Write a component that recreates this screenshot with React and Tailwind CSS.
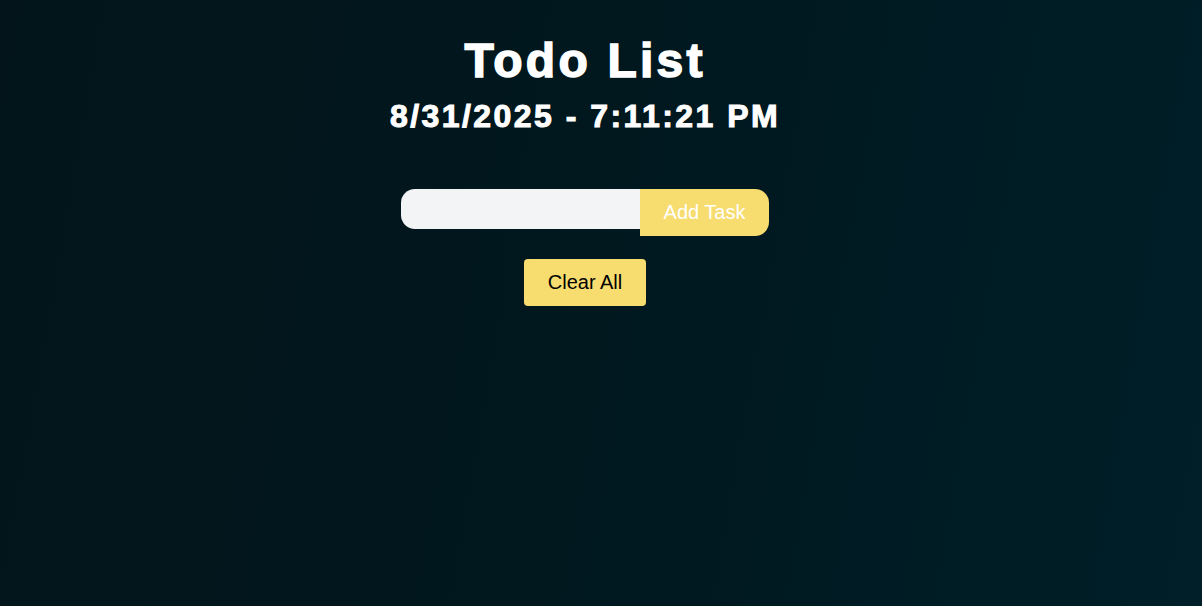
import { useState } from 'react';

export default function App() {
  const [task, setTask] = useState('');

  return (
    <div className="min-h-screen w-full bg-[linear-gradient(100deg,#03151a_0%,#00181f_55%,#001f28_100%)] font-['Liberation_Sans',Arial,sans-serif]">
      <div className="flex flex-col items-center pt-[33px] pr-[32px]">
        {/* Header */}
        <h1 className="text-[48px] leading-[55px] font-black text-white tracking-[3.2px] [-webkit-text-stroke:1.5px_white]">
          Todo List
        </h1>
        <h2 className="mt-[10px] text-[32px] leading-[37px] font-bold text-white tracking-[2.45px] [-webkit-text-stroke:1px_white]">
          8/31/2025 - 7:11:21 PM
        </h2>

        {/* Add form */}
        <div className="mt-[54px] flex items-start">
          <input
            type="text"
            value={task}
            onChange={e => setTask(e.target.value)}
            className="w-[239px] h-[40px] bg-[#f3f4f6] rounded-l-[14px] px-4 text-base text-black outline-none"
          />
          <button className="h-[47px] px-[24px] bg-[#f7dc6f] text-white text-[20px] leading-[23px] rounded-r-[14px]">
            Add Task
          </button>
        </div>

        <button className="mt-[23px] h-[47px] px-[24px] bg-[#f7dc6f] text-black text-[20px] leading-[23px] rounded-[4px]">
          Clear All
        </button>
      </div>
    </div>
  );
}
